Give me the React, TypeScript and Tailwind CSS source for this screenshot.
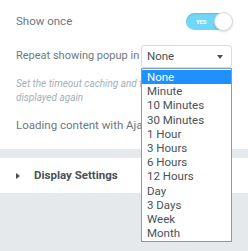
const options = [
  "None",
  "Minute",
  "10 Minutes",
  "30 Minutes",
  "1 Hour",
  "3 Hours",
  "6 Hours",
  "12 Hours",
  "Day",
  "3 Days",
  "Week",
  "Month",
];

function Switch() {
  return (
    <div className="relative w-[46px] h-[17px] rounded-full bg-[#71d7f7] shadow-[inset_0_1px_2px_rgba(0,0,0,0.12)]">
      <span className="absolute left-[10px] top-0 h-[17px] leading-[17px] text-[6px] font-bold text-white tracking-tight">
        YES
      </span>
      <span className="absolute right-[-1px] top-[-1px] w-[19px] h-[19px] rounded-full bg-white border border-[#d5dadf] shadow-[0_1px_2px_rgba(0,0,0,0.15)]" />
    </div>
  );
}

export default function App() {
  return (
    <div className="relative w-[248px] h-[251px] bg-[#e6e9ec] overflow-hidden font-['Roboto',sans-serif] text-[11.5px]">
      {/* content section */}
      <div className="bg-white px-4 pt-[13px] pb-[17px]">
        <div className="flex items-center justify-between h-[17px]">
          <span className="text-[#6d7882]">Show once</span>
          <Switch />
        </div>

        <div className="flex items-center justify-between h-[23px] mt-[15px]">
          <span className="min-w-0 text-[11px] text-[#6d7882] whitespace-nowrap">Repeat showing popup in</span>
          <div className="shrink-0 w-[91px] h-[23px] border border-[#d5dadf] rounded-[3px] flex items-center justify-between pl-[5px] pr-[8px]">
            <span className="text-[#495157]">None</span>
            <span className="w-0 h-0 border-l-[3.5px] border-r-[3.5px] border-t-[4px] border-l-transparent border-r-transparent border-t-[#495157]" />
          </div>
        </div>

        <p className="mt-[9px] text-[10px] leading-[14px] italic text-[#a4afb7]">
          Set the timeout caching and the popup will be displayed again
        </p>

        <div className="mt-[13px] h-[14px] leading-[14px] text-[#6d7882]">Loading content with Ajax</div>
      </div>

      <div className="h-[9px]" />

      {/* display settings */}
      <div className="bg-white h-[35px] flex items-center px-4">
        <span className="w-0 h-0 border-t-[3.5px] border-b-[3.5px] border-l-[4px] border-t-transparent border-b-transparent border-l-[#495157]" />
        <span className="ml-[14px] font-bold text-[#495157]">Display Settings</span>
      </div>

      {/* open dropdown */}
      <div className="absolute left-[141px] top-[68px] w-[91px] h-[174px] bg-white border border-[#7f9db9] pt-[1px]">
        {options.map((opt, i) => (
          <div
            key={opt}
            className={
              i === 0
                ? "h-[14.2px] leading-[14.2px] pl-[5px] bg-[#1e90ff] text-white"
                : "h-[14.2px] leading-[14.2px] pl-[5px] text-[#495157]"
            }
          >
            {opt}
          </div>
        ))}
      </div>
    </div>
  );
}
